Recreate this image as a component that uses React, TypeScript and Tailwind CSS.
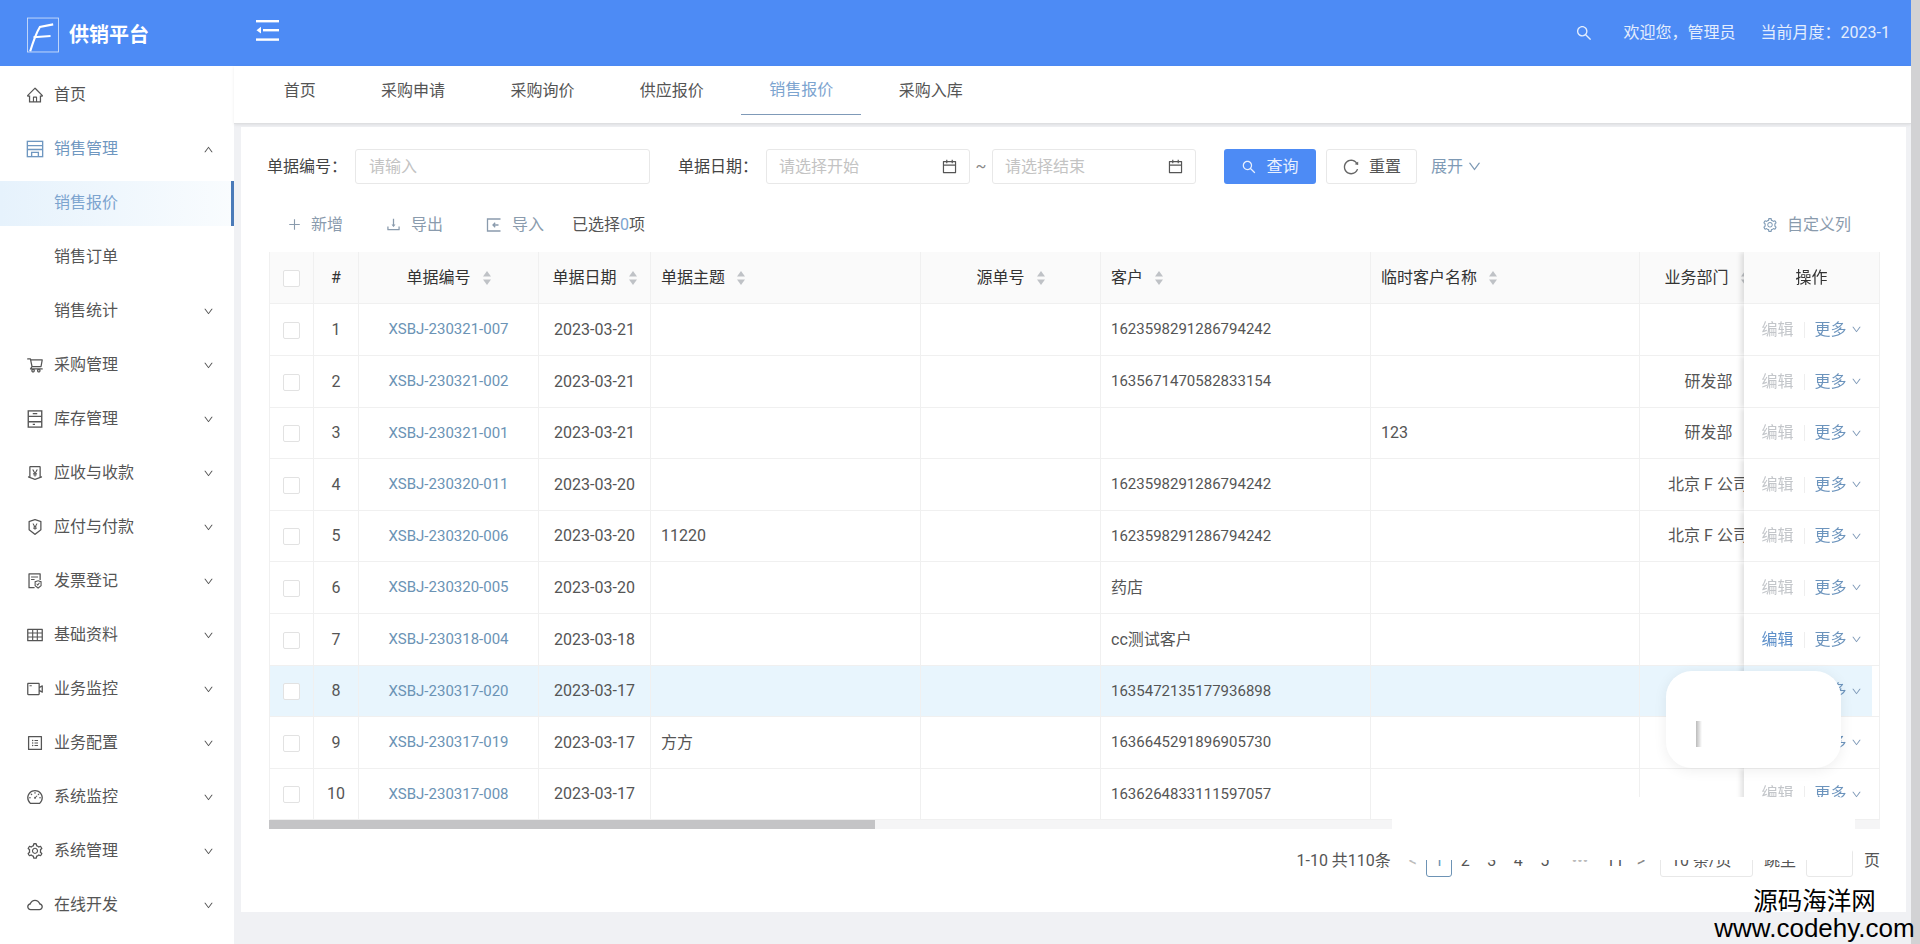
import {
  AiOutlineCalendar,
  AiOutlineCloud,
  AiOutlineDashboard,
  AiOutlineDown,
  AiOutlineDownload,
  AiOutlineFileProtect,
  AiOutlineHome,
  AiOutlineMoneyCollect,
  AiOutlinePlus,
  AiOutlineProfile,
  AiOutlinePropertySafety,
  AiOutlineReload,
  AiOutlineSearch,
  AiOutlineSetting,
  AiOutlineShoppingCart,
  AiOutlineTable,
  AiOutlineUp,
  AiOutlineVideoCamera,
} from "react-icons/ai"
import type { ComponentType, ReactNode } from "react"

const font = "font-['Roboto','Noto_Sans_CJK_SC',sans-serif]"

function SalesIcon({ className }: { className?: string }) {
  return (
    <svg viewBox="0 0 16 16" className={className} fill="none" stroke="currentColor" strokeWidth="1.2">
      <rect x="1.2" y="1.2" width="13.6" height="13.6" />
      <path d="M1.2 5 H14.8 M1.2 8.4 H14.8 M5 14.8 V11 H11 V14.8" />
    </svg>
  )
}

function StockIcon({ className }: { className?: string }) {
  return (
    <svg viewBox="0 0 16 16" className={className} fill="none" stroke="currentColor" strokeWidth="1.2">
      <rect x="2" y="0.8" width="12" height="14.4" />
      <path d="M2 5.6 H14 M2 10.4 H14 M6 3.2 H10 M6 12.8 H8" />
    </svg>
  )
}

function ImportIcon({ className }: { className?: string }) {
  return (
    <svg viewBox="0 0 16 16" className={className} fill="none" stroke="currentColor" strokeWidth="1.3">
      <path d="M14.5 2 H1.5 V14 H14.5" />
      <path d="M12.5 8 H7 M9.2 5.8 L7 8 L9.2 10.2" />
    </svg>
  )
}

const menu: { label: string; icon?: ComponentType<{ className?: string }>; state?: string }[] = [
  { label: "首页", icon: AiOutlineHome, state: "leaf" },
  { label: "销售管理", icon: SalesIcon, state: "open" },
  { label: "销售报价", state: "active" },
  { label: "销售订单", state: "leaf" },
  { label: "销售统计" },
  { label: "采购管理", icon: AiOutlineShoppingCart },
  { label: "库存管理", icon: StockIcon },
  { label: "应收与收款", icon: AiOutlineMoneyCollect },
  { label: "应付与付款", icon: AiOutlinePropertySafety },
  { label: "发票登记", icon: AiOutlineFileProtect },
  { label: "基础资料", icon: AiOutlineTable },
  { label: "业务监控", icon: AiOutlineVideoCamera },
  { label: "业务配置", icon: AiOutlineProfile },
  { label: "系统监控", icon: AiOutlineDashboard },
  { label: "系统管理", icon: AiOutlineSetting },
  { label: "在线开发", icon: AiOutlineCloud },
]

const tabs = ["首页", "采购申请", "采购询价", "供应报价", "销售报价", "采购入库"]

const rows = [
  { no: "XSBJ-230321-007", date: "2023-03-21", subject: "", customer: "1623598291286794242", temp: "", dept: "", h: "h-[52px]" },
  { no: "XSBJ-230321-002", date: "2023-03-21", subject: "", customer: "1635671470582833154", temp: "", dept: "研发部", h: "h-[52px]" },
  { no: "XSBJ-230321-001", date: "2023-03-21", subject: "", customer: "", temp: "123", dept: "研发部", h: "h-[51px]" },
  { no: "XSBJ-230320-011", date: "2023-03-20", subject: "", customer: "1623598291286794242", temp: "", dept: "北京 F 公司", h: "h-[52px]" },
  { no: "XSBJ-230320-006", date: "2023-03-20", subject: "11220", customer: "1623598291286794242", temp: "", dept: "北京 F 公司", h: "h-[51px]" },
  { no: "XSBJ-230320-005", date: "2023-03-20", subject: "", customer: "药店", temp: "", dept: "", h: "h-[52px]" },
  { no: "XSBJ-230318-004", date: "2023-03-18", subject: "", customer: "cc测试客户", temp: "", dept: "", canEdit: true, h: "h-[52px]" },
  { no: "XSBJ-230317-020", date: "2023-03-17", subject: "", customer: "1635472135177936898", temp: "", dept: "", hover: true, h: "h-[51px]" },
  { no: "XSBJ-230317-019", date: "2023-03-17", subject: "方方", customer: "1636645291896905730", temp: "", dept: "", h: "h-[52px]" },
  { no: "XSBJ-230317-008", date: "2023-03-17", subject: "", customer: "1636264833111597057", temp: "", dept: "", h: "h-[51px]" },
]

function Logo() {
  return (
    <svg viewBox="0 0 33 36" className="h-[36px] w-[32px] shrink-0" fill="none" stroke="#fff">
      <rect x="0.5" y="0.5" width="32" height="35" strokeWidth="0.9" stroke="#cfe0fb" />
      <path d="M3.3 34.7 C6 26 10 15 13.3 9.7 L27 7" strokeWidth="2.2" />
      <path d="M6.7 20.3 L24.3 19" strokeWidth="2.2" />
    </svg>
  )
}

function FoldIcon() {
  return (
    <svg viewBox="0 0 23 21" className="h-[21px] w-[23px]" fill="#fff">
      <rect x="0" y="0" width="23" height="2.4" />
      <rect x="7" y="9" width="16" height="2.4" />
      <rect x="0" y="18.4" width="23" height="2.4" />
      <path d="M0.5 10.2 L5 6.8 V13.6 Z" />
    </svg>
  )
}

function SortIcon() {
  return (
    <svg viewBox="0 0 8 16" className="ml-[12px] h-[16px] w-[8px] shrink-0" fill="#bfc2c6">
      <path d="M4 1 L8 6.5 H0 Z" />
      <path d="M4 15 L0 9.5 H8 Z" />
    </svg>
  )
}

function Checkbox() {
  return <span className="inline-block h-[17px] w-[17px] rounded-[2px] border border-[#e2e2e2] bg-white align-middle" />
}

function DateInput({ placeholder }: { placeholder: string }) {
  return (
    <div className="flex h-[35px] w-[204px] items-center justify-between rounded-[3px] border border-[#e8e8e8] pl-[12px] pr-[11px] text-[16px] text-[#c3c3c3]">
      {placeholder}
      <AiOutlineCalendar className="h-[17px] w-[17px] text-[#555]" />
    </div>
  )
}

function ToolButton({ icon, label, className }: { icon: ReactNode; label: string; className: string }) {
  return (
    <div className={`flex items-center text-[16px] text-[#8a9bad] ${className}`}>
      {icon}
      {label}
    </div>
  )
}

function Th({ children, center = false, className = "" }: { children?: ReactNode; center?: boolean; className?: string }) {
  return (
    <th className={`border-r border-b border-[#f0f0f0] bg-[#fafafa] pl-[10px] pr-[10px] text-[16px] font-normal text-[#333] ${className}`}>
      <div className={`flex items-center whitespace-nowrap ${center ? "justify-center" : ""}`}>
        {children}
        <SortIcon />
      </div>
    </th>
  )
}

export default function App() {
  return (
    <div className={`relative flex h-[944px] w-[1920px] overflow-hidden bg-[#f0f1f4] ${font}`}>
      <div className="flex w-[1911px] flex-col">
        <header className="flex h-[66px] shrink-0 items-center bg-[#4d8bf5] text-[#e3edfd]">
          <div className="flex w-[234px] items-center pl-[27px] pt-[4px]">
            <Logo />
            <span className="ml-[10px] text-[20px] font-bold text-white">供销平台</span>
          </div>
          <div className="ml-[22px] -mt-[6px]">
            <FoldIcon />
          </div>
          <div className="ml-auto flex items-center pr-[21px] text-[16px]">
            <AiOutlineSearch className="h-[18px] w-[18px]" />
            <span className="ml-[31px]">欢迎您，管理员</span>
            <span className="ml-[25px]">当前月度：2023-1</span>
          </div>
        </header>

        <div className="flex min-h-0 flex-1">
          <aside className="w-[234px] shrink-0 bg-white pt-[2px] text-[16px] text-[#555]">
            {menu.map((m) => (
              <div key={m.label} className="flex h-[54px] items-center">
                <div
                  className={`relative flex h-[45px] w-full items-center ${m.state === "active" ? "bg-gradient-to-r from-[#e6f2fc] to-[#f9fcfe]" : ""}`}
                >
                  <span className="flex w-[54px] pl-[26px]">
                    {m.icon && (
                      <m.icon className={`h-[18px] w-[18px] ${m.state === "open" ? "text-[#6f97c0]" : "text-[#555]"}`} />
                    )}
                  </span>
                  <span className={m.state === "open" ? "text-[#6f97c0]" : m.state === "active" ? "text-[#7ca4cf]" : ""}>{m.label}</span>
                  {m.state === "open" && <AiOutlineUp className="absolute left-[203px] h-[11px] w-[11px] text-[#555]" />}
                  {!m.state && <AiOutlineDown className="absolute left-[203px] h-[11px] w-[11px] text-[#555]" />}
                  {m.state === "active" && <span className="absolute right-0 top-0 h-full w-[3px] bg-[#4a7ab8]" />}
                </div>
              </div>
            ))}
          </aside>

          <main className="flex min-w-0 flex-1 flex-col">
            <nav className="flex h-[58px] shrink-0 border-b border-[#dedfe1] bg-white pl-[17px] text-[16px] text-[#555] shadow-[0_1px_3px_rgba(0,0,0,0.08)]">
              {tabs.map((t) => (
                <div key={t} className="mb-[8px] flex px-[4.7px]">
                  <div className={`flex items-center px-[28px] ${t === "销售报价" ? "border-b border-[#7f9ab8] text-[#7ca4cf]" : ""}`}>{t}</div>
                </div>
              ))}
            </nav>

            <div className="mt-[3px] ml-[7px] mr-[5px] flex h-[785px] flex-col bg-white pl-[28px]">
              <div className="-ml-[2px] mt-[22px] flex h-[35px] items-center text-[16px] text-[#444]">
                <span className="w-[88px]">单据编号：</span>
                <div className="flex h-[35px] w-[295px] items-center rounded-[3px] border border-[#e8e8e8] pl-[13px] text-[#c3c3c3]">请输入</div>
                <span className="ml-[28px] w-[88px]">单据日期：</span>
                <DateInput placeholder="请选择开始" />
                <span className="w-[22px] text-center text-[#888]">~</span>
                <DateInput placeholder="请选择结束" />
                <div className="ml-[28px] flex h-[35px] w-[92px] items-center justify-center rounded-[3px] bg-[#4d8bf5] text-[#e8f0fe]">
                  <AiOutlineSearch className="mr-[9px] h-[16px] w-[16px]" />
                  查询
                </div>
                <div className="ml-[10px] flex h-[35px] w-[91px] items-center justify-center rounded-[3px] border border-[#e8e8e8] text-[#555]">
                  <AiOutlineReload className="mr-[9px] h-[18px] w-[18px] text-[#666]" />
                  重置
                </div>
                <div className="ml-[14px] flex items-center text-[#7e9ab5]">
                  展开
                  <AiOutlineDown className="ml-[4px] h-[15px] w-[15px]" />
                </div>
              </div>

              <div className="mt-[23px] flex h-[35px] items-center text-[16px]">
                <ToolButton className="ml-[18px] w-[98px]" label="新增" icon={<AiOutlinePlus className="mr-[9px] h-[15px] w-[15px]" />} />
                <ToolButton className="w-[101px]" label="导出" icon={<AiOutlineDownload className="mr-[9px] h-[17px] w-[17px]" />} />
                <ToolButton className="w-[86px]" label="导入" icon={<ImportIcon className="mr-[10px] h-[16px] w-[16px]" />} />
                <span className="text-[#555]">
                  已选择<span className="text-[#7ca4cf]">0</span>项
                </span>
                <div className="ml-auto mr-[55px] flex items-center text-[#8a9bad]">
                  <AiOutlineSetting className="mr-[9px] h-[16px] w-[16px] text-[#7e9ab5]" />
                  自定义列
                </div>
              </div>

              <div className="mt-[10px] w-[1611px] overflow-hidden border-l border-[#f0f0f0]">
                <table className="w-[1644px] table-fixed border-separate border-spacing-0 text-[16px] text-[#555]">
                  <colgroup>
                    <col className="w-[44px]" />
                    <col className="w-[45px]" />
                    <col className="w-[180px]" />
                    <col className="w-[112px]" />
                    <col className="w-[270px]" />
                    <col className="w-[180px]" />
                    <col className="w-[270px]" />
                    <col className="w-[269px]" />
                    <col className="w-[138px]" />
                    <col className="w-[136px]" />
                  </colgroup>
                  <thead>
                    <tr className="h-[52px]">
                      <th className="border-r border-b border-[#f0f0f0] bg-[#fafafa] text-center font-normal">
                        <Checkbox />
                      </th>
                      <th className="border-r border-b border-[#f0f0f0] bg-[#fafafa] text-center text-[16px] font-normal text-[#333]">#</th>
                      <Th center>单据编号</Th>
                      <Th center>单据日期</Th>
                      <Th>单据主题</Th>
                      <Th center>源单号</Th>
                      <Th>客户</Th>
                      <Th>临时客户名称</Th>
                      <Th center className="pr-[14px]">
                        业务部门
                      </Th>
                      <th className="sticky right-0 border-r border-b border-[#f0f0f0] bg-[#fafafa] text-center text-[16px] font-normal text-[#333] shadow-[-3px_0_5px_rgba(0,0,0,0.12)] [clip-path:inset(0_0_0_-10px)]">
                        操作
                      </th>
                    </tr>
                  </thead>
                  <tbody>
                    {rows.map((r, i) => {
                      const cell = `border-r border-b border-[#f0f0f0] ${r.hover ? "bg-[#e8f5fd]" : "bg-white"}`
                      return (
                        <tr key={r.no} className={r.h}>
                          <td className={`${cell} text-center`}>
                            <Checkbox />
                          </td>
                          <td className={`${cell} text-center`}>{i + 1}</td>
                          <td className={`${cell} text-center text-[15px] text-[#6b93b5]`}>{r.no}</td>
                          <td className={`${cell} text-center`}>{r.date}</td>
                          <td className={`${cell} px-[10px]`}>{r.subject}</td>
                          <td className={cell} />
                          <td className={`${cell} px-[10px] ${/^\d+$/.test(r.customer) ? "text-[15px]" : ""}`}>{r.customer}</td>
                          <td className={`${cell} px-[10px]`}>{r.temp}</td>
                          <td className={`${cell} whitespace-nowrap text-center`}>{r.dept}</td>
                          <td
                            className={`${cell} sticky right-0 shadow-[-3px_0_5px_rgba(0,0,0,0.12)] [clip-path:inset(0_0_0_-10px)] ${r.hover ? "bg-[linear-gradient(to_right,#e8f5fd_128px,#fff_128px)]" : ""}`}
                          >
                            <div className="flex items-center justify-center">
                              <span className={r.canEdit ? "text-[#5d8fc9]" : "text-[#c3c6ca]"}>编辑</span>
                              <span className="mx-[10px] h-[16px] w-px bg-[#eeeeee]" />
                              <span className="text-[#6c94bd]">更多</span>
                              <AiOutlineDown className="ml-[4px] h-[11px] w-[11px] text-[#7f9ab8]" />
                            </div>
                          </td>
                        </tr>
                      )
                    })}
                  </tbody>
                </table>
              </div>

              <div className="h-[9px] w-[1611px] bg-[#f5f5f6]">
                <div className="h-full w-[606px] bg-[#c4c4c6]" />
              </div>

              <div className="mt-[16px] flex h-[32px] items-center justify-end pr-[26px] text-[16px] text-[#555]">
                <span>1-10 共110条</span>
                <span className="ml-[18px] mr-[9px] text-[#bbb]">&lt;</span>
                <div className="flex h-[32px] w-[26px] items-center justify-center rounded-[3px] border border-[#6d93b5] text-[#6d93b5]">1</div>
                <span className="w-[26.5px] text-center">2</span>
                <span className="w-[26.5px] text-center">3</span>
                <span className="w-[26.5px] text-center">4</span>
                <span className="w-[26.5px] text-center">5</span>
                <span className="w-[44px] text-center text-[#bbb]">•••</span>
                <span className="w-[26px] text-center">11</span>
                <span className="w-[26px] text-center text-[#888]">&gt;</span>
                <div className="ml-[6px] flex h-[32px] w-[93px] items-center rounded-[3px] border border-[#e8e8e8] pl-[10px]">10 条/页</div>
                <span className="ml-[11px]">跳至</span>
                <div className="ml-[10px] h-[32px] w-[47px] rounded-[3px] border border-[#e8e8e8]" />
                <span className="ml-[11px]">页</span>
              </div>
            </div>
          </main>
        </div>
      </div>
      <div className="w-[9px] bg-[#d2d2d4]" />

      {/* white retouch patches from the screenshot */}
      <div className="absolute left-[1666px] top-[671px] h-[97px] w-[175px] rounded-[26px] bg-white shadow-[0_2px_14px_rgba(0,0,0,0.07)]">
        <span className="absolute left-[30px] top-[50px] h-[26px] w-[6px] bg-gradient-to-r from-[#bbb] to-white" />
      </div>
      <div className="absolute left-[1392px] top-[797px] h-[63px] w-[463px] rounded-[18px] bg-white" />

      <div className="absolute left-[1714px] top-[888px] w-[201px] text-center font-['Liberation_Sans','Noto_Sans_CJK_SC',sans-serif] leading-none text-black">
        <div className="text-[24.5px] leading-[27px]">源码海洋网</div>
        <div className="text-[26px] leading-[27px]">www.codehy.com</div>
      </div>
    </div>
  )
}
